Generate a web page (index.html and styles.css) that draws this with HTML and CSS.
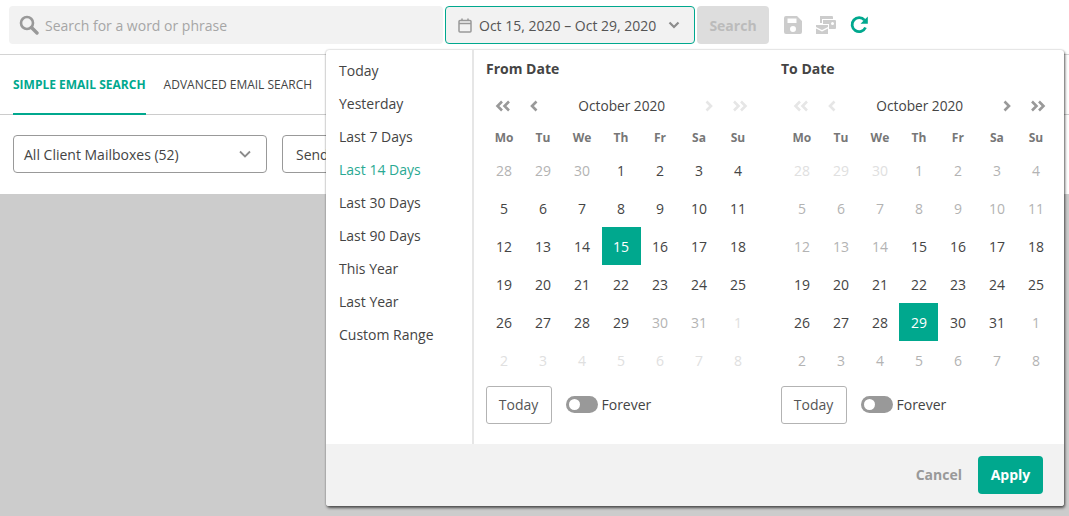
FILE: index.html
```html
<!DOCTYPE html>
<html lang="en">
<head>
<meta charset="utf-8">
<title>Email Search</title>
<link rel="stylesheet" href="styles.css">
</head>
<body>
<header class="topbar">
  <div class="search-input">
    <svg class="search-ico" width="20" height="20" viewBox="0 0 20 20"><circle cx="8" cy="8" r="6" fill="none" stroke="#999" stroke-width="2.6"/><path d="M12.5 12.5L18 18" stroke="#999" stroke-width="3.4" stroke-linecap="round"/></svg>
    <span>Search for a word or phrase</span>
  </div>
  <div class="date-field">
    <svg class="cal-ico" width="14" height="15" viewBox="0 0 14 15"><rect x="1" y="2.5" width="12" height="11.5" rx="1" fill="none" stroke="#999" stroke-width="1.5"/><path d="M1 5.5H13" stroke="#999" stroke-width="1.5"/><path d="M4 0.5V3M10 0.5V3" stroke="#999" stroke-width="1.5"/></svg>
    <span class="date-text">Oct 15, 2020 – Oct 29, 2020</span>
    <svg class="chev-ico" width="12" height="8" viewBox="0 0 12 8"><path d="M1.5 1.5L6 6L10.5 1.5" fill="none" stroke="#8c8c8c" stroke-width="2.2"/></svg>
  </div>
  <button class="search-btn">Search</button>
  <div class="tools">
    <svg width="18" height="18" viewBox="0 0 18 18"><path fill="#ccc" fill-rule="evenodd" d="M2 0H13L18 5V16a2 2 0 0 1-2 2H2a2 2 0 0 1-2-2V2a2 2 0 0 1 2-2ZM3.5 2.5V7H12.5V2.5ZM9 10a3 3 0 1 0 0 6a3 3 0 0 0 0-6Z"/></svg>
    <svg width="20" height="18" viewBox="0 0 20 18"><path fill="#ccc" d="M4 0H16a1 1 0 0 1 1 1V3H6V7H4ZM7 4H19a1 1 0 0 1 1 1V12a1 1 0 0 1-1 1H13V8H7ZM15 7.500a1.500 1.500 0 1 0 3 0a1.500 1.500 0 0 0-3 0ZM0 9H12V11L6 14L0 11ZM0 12.500L6 15.500L12 12.500V18H0Z"/></svg>
    <svg width="18" height="18" viewBox="0 0 18 18"><path d="M14.500 4.200A7 7 0 1 0 15.500 11.500" fill="none" stroke="#00a88e" stroke-width="2.800"/><path d="M17.800 0.500V7.800H10.500Z" fill="#00a88e"/></svg>
  </div>
</header>

<nav class="tabs">
  <a class="tab tab-active">SIMPLE EMAIL SEARCH</a>
  <a class="tab">ADVANCED EMAIL SEARCH</a>
</nav>

<section class="filters">
  <div class="select select-mail">
    <span>All Client Mailboxes (52)</span>
    <svg width="12" height="8" viewBox="0 0 12 8"><path d="M1 1.500L6 6.500L11 1.500" fill="none" stroke="#8c8c8c" stroke-width="1.800"/></svg>
  </div>
  <div class="select select-send"><span>Send</span></div>
</section>

<main class="backdrop"></main>

<div class="popup">
  <div class="popup-body">
    <ul class="ranges">
      <li>Today</li><li>Yesterday</li><li>Last 7 Days</li><li class="range-active">Last 14 Days</li><li>Last 30 Days</li><li>Last 90 Days</li><li>This Year</li><li>Last Year</li><li>Custom Range</li>
    </ul>
    <div class="calendars">
      <div class="cal cal-from">
        <h3>From Date</h3>
        <div class="month-nav">
          <svg class="nav" width="16" height="12" viewBox="0 0 16 12"><path d="M7 1.500L2.500 6L7 10.500M14 1.500L9.500 6L14 10.500" fill="none" stroke="#999" stroke-width="2.600"/></svg>
          <svg class="nav" width="10" height="12" viewBox="0 0 10 12"><path d="M7.500 1.500L3 6L7.500 10.500" fill="none" stroke="#999" stroke-width="2.600"/></svg>
          <span class="month">October 2020</span>
          <svg class="nav" width="10" height="12" viewBox="0 0 10 12"><path d="M2.500 1.500L7 6L2.500 10.500" fill="none" stroke="#e6e6e6" stroke-width="2.600"/></svg>
          <svg class="nav" width="16" height="12" viewBox="0 0 16 12"><path d="M2 1.500L6.500 6L2 10.500M9 1.500L13.500 6L9 10.500" fill="none" stroke="#e6e6e6" stroke-width="2.600"/></svg>
        </div>
        <div class="grid">
          <b>Mo</b><b>Tu</b><b>We</b><b>Th</b><b>Fr</b><b>Sa</b><b>Su</b>
          <i class="off">28</i><i class="off">29</i><i class="off">30</i><i>1</i><i>2</i><i>3</i><i>4</i>
          <i>5</i><i>6</i><i>7</i><i>8</i><i>9</i><i>10</i><i>11</i>
          <i>12</i><i>13</i><i>14</i><i class="sel">15</i><i>16</i><i>17</i><i>18</i>
          <i>19</i><i>20</i><i>21</i><i>22</i><i>23</i><i>24</i><i>25</i>
          <i>26</i><i>27</i><i>28</i><i>29</i><i class="off">30</i><i class="off">31</i><i class="far">1</i>
          <i class="far">2</i><i class="far">3</i><i class="far">4</i><i class="far">5</i><i class="far">6</i><i class="far">7</i><i class="far">8</i>
        </div>
        <div class="cal-foot">
          <button class="today">Today</button>
          <span class="toggle"></span>
          <span class="forever">Forever</span>
        </div>
      </div>
      <div class="cal cal-to">
        <h3>To Date</h3>
        <div class="month-nav">
          <svg class="nav" width="16" height="12" viewBox="0 0 16 12"><path d="M7 1.500L2.500 6L7 10.500M14 1.500L9.500 6L14 10.500" fill="none" stroke="#e6e6e6" stroke-width="2.600"/></svg>
          <svg class="nav" width="10" height="12" viewBox="0 0 10 12"><path d="M7.500 1.500L3 6L7.500 10.500" fill="none" stroke="#e6e6e6" stroke-width="2.600"/></svg>
          <span class="month">October 2020</span>
          <svg class="nav" width="10" height="12" viewBox="0 0 10 12"><path d="M2.500 1.500L7 6L2.500 10.500" fill="none" stroke="#999" stroke-width="2.600"/></svg>
          <svg class="nav" width="16" height="12" viewBox="0 0 16 12"><path d="M2 1.500L6.500 6L2 10.500M9 1.500L13.500 6L9 10.500" fill="none" stroke="#999" stroke-width="2.600"/></svg>
        </div>
        <div class="grid">
          <b>Mo</b><b>Tu</b><b>We</b><b>Th</b><b>Fr</b><b>Sa</b><b>Su</b>
          <i class="far">28</i><i class="far">29</i><i class="far">30</i><i class="dim">1</i><i class="dim">2</i><i class="dim">3</i><i class="dim">4</i>
          <i class="dim">5</i><i class="dim">6</i><i class="dim">7</i><i class="dim">8</i><i class="dim">9</i><i class="dim">10</i><i class="dim">11</i>
          <i class="dim">12</i><i class="dim">13</i><i class="dim">14</i><i>15</i><i>16</i><i>17</i><i>18</i>
          <i>19</i><i>20</i><i>21</i><i>22</i><i>23</i><i>24</i><i>25</i>
          <i>26</i><i>27</i><i>28</i><i class="sel">29</i><i>30</i><i>31</i><i class="off">1</i>
          <i class="off">2</i><i class="off">3</i><i class="off">4</i><i class="off">5</i><i class="off">6</i><i class="off">7</i><i class="off">8</i>
        </div>
        <div class="cal-foot">
          <button class="today">Today</button>
          <span class="toggle"></span>
          <span class="forever">Forever</span>
        </div>
      </div>
    </div>
  </div>
  <footer class="popup-foot">
    <button class="cancel">Cancel</button>
    <button class="apply">Apply</button>
  </footer>
</div>
</body>
</html>
```
FILE: styles.css
```css
* { box-sizing: border-box; }
html, body { height: 100%; }
body {
  margin: 0;
  width: 1069px;
  height: 516px;
  overflow: hidden;
  position: relative;
  display: flex;
  flex-direction: column;
  background: #fff;
  color: #333;
  font-family: "Open Sans", "Liberation Sans", sans-serif;
  font-size: 14px;
}
button { font-family: inherit; cursor: pointer; }

.topbar {
  height: 55px;
  flex: none;
  display: flex;
  padding: 6px 0 0 9px;
  border-bottom: 1px solid #d4d4d4;
  gap: 2px;
}
.search-input {
  width: 434px;
  height: 38px;
  background: #f2f2f2;
  border-radius: 4px;
  display: flex;
  align-items: center;
  padding-left: 10px;
  gap: 6px;
  color: #a6a6a6;
  font-size: 14px;
}
.date-field {
  width: 250px;
  height: 38px;
  background: #f2f2f2;
  border: 1px solid #00a88e;
  border-radius: 4px;
  display: flex;
  align-items: center;
  padding-left: 12px;
  color: #555;
}
.date-text { margin-left: 7px; }
.chev-ico { margin-left: 12px; }
.search-btn {
  width: 72px;
  height: 38px;
  border: 0;
  border-radius: 4px;
  background: #ddd;
  color: #bbb;
  font-weight: 700;
  font-size: 14px;
}
.tools {
  display: flex;
  gap: 14px;
  padding: 10px 0 0 13px;
  align-items: flex-start;
}

.tabs {
  height: 60px;
  flex: none;
  display: flex;
  padding-left: 13px;
  gap: 18px;
  border-bottom: 1px solid #ccc;
}
.tab {
  height: 60px;
  line-height: 59px;
  font-size: 12px;
  color: #444;
  white-space: nowrap;
}
.tab-active {
  color: #00a88e;
  font-weight: 700;
  border-bottom: 2px solid #00a88e;
}

.filters {
  height: 79px;
  flex: none;
  display: flex;
  padding: 20px 0 0 13px;
  gap: 15px;
}
.select {
  height: 38px;
  border: 1px solid #999;
  border-radius: 4px;
  display: flex;
  align-items: center;
  justify-content: space-between;
  padding: 0 15px 0 10px;
  color: #444;
}
.select-mail { width: 254px; }
.select-send { width: 120px; padding-left: 13px; }

.backdrop { flex: 1; background: #ccc; }

.popup {
  position: absolute;
  left: 326px;
  top: 50px;
  width: 738px;
  height: 456px;
  background: #fff;
  border-radius: 3px;
  box-shadow: 1px 2px 3px rgba(0,0,0,.6), 0 0 2px rgba(0,0,0,.3);
  display: flex;
  flex-direction: column;
  overflow: hidden;
}
.popup-body { flex: 1; display: flex; min-height: 0; }
.ranges {
  list-style: none;
  margin: 0;
  padding: 4px 0 0 13px;
  width: 148px;
  flex: none;
  border-right: 2px solid #e6e6e6;
}
.ranges li { height: 33px; line-height: 33px; color: #444; }
.ranges .range-active { color: #2aa993; }

.calendars { display: flex; padding-left: 12px; }
.cal { width: 295px; flex: none; }
.cal h3 {
  margin: 0;
  height: 38px;
  line-height: 38px;
  font-size: 14px;
  font-weight: 700;
  color: #444;
}
.month-nav {
  height: 35px;
  display: flex;
  align-items: center;
  width: 273px;
}
.cal-from .grid { margin-left: -1.5px; }
.cal-to .grid { margin-left: 1.4px; }
.cal-from .month-nav { margin-left: -0.75px; }
.cal-to .month-nav { margin-left: 2.25px; }
.month { flex: 1; text-align: center; font-size: 13.7px; color: #444; }
.nav { flex: none; margin: 0 9px; }
.month-nav .nav:first-child { margin: 0 9px 0 10px; }
.month-nav .nav:last-child { margin: 0 10px 0 9px; }
.grid {
  width: 273px;
  display: grid;
  grid-template-columns: repeat(7, 39px);
  grid-template-rows: 28px repeat(6, 38px);
}
.grid b, .grid i {
  font-style: normal;
  display: flex;
  align-items: center;
  justify-content: center;
  font-size: 14px;
  color: #444;
}
.grid b { font-size: 12px; font-weight: 700; color: #777; }
.grid .off { color: #b3b3b3; }
.grid .dim { color: #b3b3b3; }
.grid .far { color: #e0e0e0; }
.grid .sel { background: #00a88e; color: #fff; }
.cal-foot {
  display: flex;
  align-items: center;
  margin-top: 7px;
  height: 38px;
  margin-left: -0.5px;
}
.today {
  width: 66px;
  height: 38px;
  background: #fff;
  border: 1px solid #b3b3b3;
  border-radius: 3px;
  color: #555;
  font-size: 14px;
  padding: 0 0 2px;
}
.toggle {
  width: 32px;
  height: 17px;
  border-radius: 9px;
  background: #999;
  margin-left: 14px;
  position: relative;
  top: -1px;
}
.toggle::before {
  content: "";
  position: absolute;
  left: 3px;
  top: 3px;
  width: 11px;
  height: 11px;
  border-radius: 50%;
  background: #fff;
}
.forever { margin-left: 4px; color: #444; position: relative; top: -1px; }

.popup-foot {
  height: 62px;
  flex: none;
  background: #f2f2f2;
  display: flex;
  justify-content: flex-end;
  align-items: flex-start;
  padding: 12px 21px 0 0;
  gap: 16px;
}
.cancel {
  background: none;
  border: 0;
  padding: 0 0 2px;
  height: 38px;
  color: #999;
  font-weight: 700;
  font-size: 14px;
}
.apply {
  width: 65px;
  height: 38px;
  border: 0;
  border-radius: 4px;
  background: #00a88e;
  color: #fff;
  font-weight: 700;
  font-size: 14px;
  padding: 0 0 2px;
}
```
